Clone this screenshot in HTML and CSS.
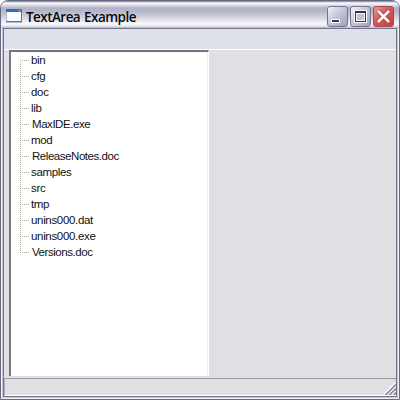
FILE: index.html
```
<!DOCTYPE html>
<html lang="en">
<head>
<meta charset="utf-8">
<title>TextArea Example</title>
<link rel="stylesheet" href="styles.css">
</head>
<body>
<div class="window">
  <header class="titlebar">
    <svg class="app-icon" width="16" height="14" viewBox="0 0 16 14" shape-rendering="crispEdges">
      <rect width="16" height="14" fill="#a8bcd2"/>
      <rect x="1" y="3" width="14" height="10" fill="#fcfefe"/>
      <rect width="16" height="3" fill="#2a70b8"/>
      <rect x="12" y="1" width="3" height="1" fill="#8ca8c8"/>
      <rect y="12" width="16" height="1" fill="#52789c"/>
      <rect x="15" y="3" width="1" height="10" fill="#52789c"/>
    </svg>
    <h1 class="title">TextArea Example</h1>
    <div class="controls">
      <button class="control" aria-label="Minimize"><svg width="21" height="21" viewBox="0 0 21 21" shape-rendering="crispEdges"><path d="M4 13h9v4H4z" fill="#fff"/><path d="M5 14h7v2H5z" fill="#34344c"/></svg></button>
      <button class="control" aria-label="Maximize"><svg width="21" height="21" viewBox="0 0 21 21" shape-rendering="crispEdges"><path d="M4 4h13v13H4z" fill="#f8f8fc"/><path d="M5 5h11v11H5z" fill="#34344c"/><path d="M6 7h9v8H6z" fill="#f8f8fc"/><path d="M7 8h7v6H7z" fill="#c2c2d4"/></svg></button>
      <button class="control close" aria-label="Close"><svg width="21" height="21" viewBox="0 0 21 21"><path d="M5 5l11 11M16 5L5 16" fill="none" stroke="#8d3540" stroke-width="4"/><path d="M5 5l11 11M16 5L5 16" fill="none" stroke="#fff" stroke-width="2.700"/></svg></button>
    </div>
  </header>
  <div class="client">
    <div class="toolbar"></div>
    <main class="content">
      <div class="tree-panel">
        <ul class="tree">
          <li>bin</li>
          <li>cfg</li>
          <li>doc</li>
          <li>lib</li>
          <li class="cap">MaxIDE.exe</li>
          <li>mod</li>
          <li class="cap">ReleaseNotes.doc</li>
          <li>samples</li>
          <li>src</li>
          <li>tmp</li>
          <li>unins000.dat</li>
          <li>unins000.exe</li>
          <li class="cap">Versions.doc</li>
        </ul>
      </div>
    </main>
    <footer class="status">
      <svg width="12" height="12" viewBox="0 0 12 12"><path d="M0 11L11 0M4 11L11 4M8 11L11 8" stroke="#fff" stroke-width="1.200"/><path d="M1.500 12L12 1.500M5.500 12L12 5.500M9.500 12L12 9.500" stroke="#85858f" stroke-width="1.500"/></svg>
    </footer>
  </div>
</div>
</body>
</html>
```
FILE: styles.css
```
* { box-sizing: border-box; }
body { margin: 0; background: #fff; }
.window {
  width: 400px;
  height: 400px;
  padding: 0 2px 2px;
  border: 1px solid #686880;
  border-radius: 8px 8px 0 0;
  background: #c6c6d6;
  box-shadow: inset 0 0 0 1px #f2f2f8;
  overflow: hidden;
}
.titlebar {
  display: flex;
  height: 27px;
  margin: 0 -2px;
  padding: 5px 5px 0 5px;
  background: linear-gradient(#77778f 0, #fff 2px, #e0e0ea 4px, #b2b2c8 7px, #b8b8cc 11px, #dcdce6 18px, #fafafd 23px, #e8e8f0 25px, #b4b4c6 27px);
}
.app-icon { margin-top: 3px; flex: none; }
.title {
  flex: 1;
  margin: 0 0 0 4px;
  font: 600 13.5px/22px "Open Sans", sans-serif;
  letter-spacing: -0.55px;
  word-spacing: 1px;
  white-space: nowrap;
  color: #08080c;
}
.controls { display: flex; gap: 2px; }
.control {
  width: 21px;
  height: 21px;
  padding: 0;
  border: 1px solid #74748c;
  border-radius: 3px;
  background: linear-gradient(135deg, #f4f4fa, #c6c6d8 45%, #a0a0ba);
}
.control svg { display: block; margin: -1px; }
.close { border-color: #a04858; background: linear-gradient(135deg, #e89898, #d85858 45%, #c84040); }
.client {
  display: flex;
  flex-direction: column;
  height: 369px;
  border: 1px solid #747488;
  background: #e0dfe3;
}
.toolbar { height: 21px; background: #dee1ea; border-bottom: 1px solid #fff; }
.content { flex: 1; padding: 0 0 2px 5px; }
.tree-panel {
  width: 200px;
  height: 326px;
  border: solid;
  border-width: 2px 1px 0 2px;
  border-color: #73737a #fff #fff #77777c;
  background: #fff;
  box-shadow: inset -1px 0 #eeede8;
}
.tree { list-style: none; margin: 0; padding: 0 0 0 9px; }
.tree li {
  position: relative;
  height: 16px;
  padding-left: 11px;
  font: 11.5px/16px "Liberation Sans", sans-serif;
  letter-spacing: -0.33px;
  color: #111;
}
.tree li.cap { padding-left: 12px; letter-spacing: -0.45px; }
.tree li::before {
  content: "";
  position: absolute;
  left: 0;
  top: 0;
  width: 1px;
  height: 16px;
  background: repeating-linear-gradient(#aaa69a 0 1px, #fff 1px 2px);
}
.tree li:first-child::before { top: 8px; height: 8px; }
.tree li:last-child::before { height: 9px; }
.tree li::after {
  content: "";
  position: absolute;
  left: 0;
  top: 8px;
  width: 9px;
  height: 1px;
  background: repeating-linear-gradient(90deg, #aaa69a 0 1px, #fff 1px 2px);
}
.status {
  display: flex;
  justify-content: flex-end;
  align-items: flex-end;
  height: 18px;
  border-top: 1px solid #9a9aa2;
  border-left: 1px solid #b0b0b8;
  border-bottom: 1px solid #fff;
}
.status svg { display: block; }
```
